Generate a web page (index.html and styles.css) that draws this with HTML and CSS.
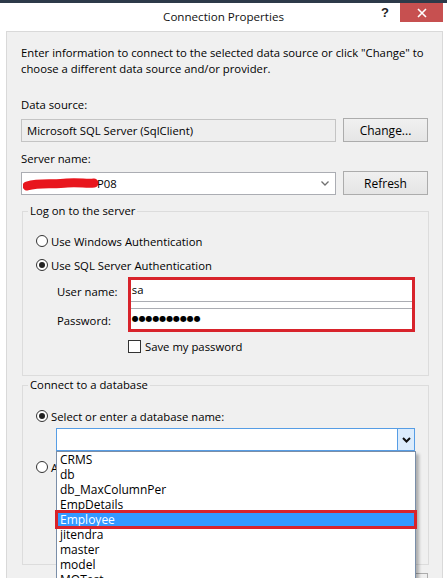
FILE: index.html
```html
<!DOCTYPE html>
<html>
<head>
<meta charset="utf-8">
<title>Connection Properties</title>
<link rel="stylesheet" href="styles.css">
</head>
<body>
<div class="topstrip"></div>
<div class="titlebar">
  <div></div>
  <div class="title">Connection Properties</div>
  <div class="title-actions">
    <span class="help">?</span>
    <span class="close">
      <svg width="10" height="10" viewBox="0 0 10 10"><path d="M1 1L9 9M9 1L1 9" stroke="#fff" stroke-width="1.6"/></svg>
    </span>
  </div>
</div>
<div class="panel">
  <p class="desc">Enter information to connect to the selected data source or click "Change" to choose a different data source and/or provider.</p>

  <div class="label mt20">Data source:</div>
  <div class="row mt5">
    <div class="textbox readonly">Microsoft SQL Server (SqlClient)</div>
    <div class="button">Change...</div>
  </div>

  <div class="label mt9">Server name:</div>
  <div class="row mt4">
    <div class="textbox combo">
      <span class="server">
        <svg class="scribble" width="76" height="14" viewBox="0 0 76 14"><path d="M4 9C18 5 30 8 44 6C56 5 64 7 71 6" stroke="#e8161d" stroke-width="9" stroke-linecap="round" fill="none"/></svg>
        <span class="server-text">P08</span>
      </span>
      <svg class="chev" width="8" height="5" viewBox="0 0 8 5"><path d="M0.5 0.5L4 4L7.5 0.5" stroke="#707070" stroke-width="1.3" fill="none"/></svg>
    </div>
    <div class="button">Refresh</div>
  </div>

  <fieldset class="group g1">
    <legend>Log on to the server</legend>
    <div class="group-body b1">
      <div class="radio-row"><span class="radio"></span><span>Use Windows Authentication</span></div>
      <div class="radio-row mt8"><span class="radio checked"></span><span>Use SQL Server Authentication</span></div>
      <div class="creds">
        <div class="cred-labels">
          <div class="cred-label l1">User name:</div>
          <div class="cred-label l2">Password:</div>
        </div>
        <div class="redframe">
          <div class="input user">sa</div>
          <div class="input pw">●●●●●●●●●●</div>
        </div>
      </div>
      <div class="check-row"><span class="checkbox"></span><span>Save my password</span></div>
    </div>
  </fieldset>

  <fieldset class="group g2">
    <legend>Connect to a database</legend>
    <div class="group-body b2">
      <div class="radio-row"><span class="radio checked"></span><span>Select or enter a database name:</span></div>
      <div class="dbcombo">
        <div class="dbcombo-btn">
          <svg width="9" height="6" viewBox="0 0 9 6"><path d="M1 1L4.5 4.5L8 1" stroke="#111" stroke-width="2" fill="none"/></svg>
        </div>
        <ul class="dblist">
          <li>CRMS</li>
          <li>db</li>
          <li>db_MaxColumnPer</li>
          <li>EmpDetails</li>
          <li class="selected">Employee</li>
          <li>jitendra</li>
          <li>master</li>
          <li>model</li>
          <li>MOTest</li>
        </ul>
      </div>
      <div class="radio-row mt8"><span class="radio"></span><span>Attach a database file:</span></div>
      <div class="row file-row">
        <div class="textbox"></div>
        <div class="button">Browse...</div>
      </div>
      <div class="label sub mt6">Logical name:</div>
      <div class="textbox sub logical"></div>
    </div>
  </fieldset>

  <div class="footer-row">
    <div class="button">Advanced...</div>
  </div>
</div>
</body>
</html>
```

FILE: styles.css
```css
* { box-sizing: border-box; }

body {
  margin: 0;
  width: 447px;
  height: 578px;
  overflow: hidden;
  background: #ffffff;
  font-family: "Open Sans", "Noto Sans", sans-serif;
  font-size: 11.3px;
  color: #000;
}

.topstrip {
  height: 3px;
  background: #2d3a49;
}

.titlebar {
  height: 28px;
  display: grid;
  grid-template-columns: 1fr auto 1fr;
  align-items: start;
}

.title {
  padding-top: 6px;
  line-height: 16px;
  font-size: 11.6px;
  color: #111;
}

.title-actions {
  display: flex;
  justify-content: flex-end;
  align-items: flex-start;
  padding-right: 4px;
}

.help {
  font-family: "Liberation Sans", sans-serif;
  font-weight: bold;
  font-size: 13px;
  line-height: 19px;
  margin-right: 11px;
  color: #222;
}

.close {
  width: 43px;
  height: 19px;
  background: #c75050;
  display: flex;
  align-items: center;
  justify-content: center;
}

.panel {
  margin: 0 4px 0 6px;
  height: 560px;
  border: 1px solid #d9d9d9;
  background: #f0f0f0;
  padding: 13px 14px 0 14px;
}

.desc {
  margin: 0;
  line-height: 16px;
}

.label { line-height: 16px; }
.mt20 { margin-top: 20px; }
.mt9 { margin-top: 9px; }
.mt8 { margin-top: 8px; }
.mt6 { margin-top: 6px; }
.mt5 { margin-top: 5px; }
.mt4 { margin-top: 4px; }

.row {
  display: flex;
  gap: 7px;
  align-items: center;
}

.textbox {
  flex: 1;
  height: 23px;
  border: 1px solid #abadb3;
  background: #fff;
  padding: 0 5px;
  line-height: 21px;
  display: flex;
  align-items: center;
}

.textbox.readonly {
  background: #eeeeee;
  border-color: #c4c4c4;
}

.combo {
  justify-content: space-between;
  padding: 0 6px 0 1px;
}

.server {
  display: flex;
  align-items: center;
}

.scribble { display: block; margin-top: 1px; }

.server-text { margin-left: -2px; }

.chev { display: block; margin-top: 1px; }

.button {
  width: 85px;
  height: 24px;
  border: 1px solid #acacac;
  background: linear-gradient(#f0f0f0, #e5e5e5);
  display: flex;
  align-items: center;
  justify-content: center;
  font-size: 12px;
}

.group {
  margin: 8px -1px 0 1px;
  padding: 0;
  border: 1px solid #dcdcdc;
  min-width: 0;
}

.group legend {
  margin-left: 5px;
  padding: 0 2px;
  line-height: 16px;
}

.g2 { margin-top: 1px; }

.group-body {
  padding: 14px 13px 21px 13px;
}

.b2 {
  padding: 15px 13px 12px 13px;
}

.radio-row {
  display: flex;
  align-items: center;
  height: 16px;
  gap: 3px;
}

.radio {
  width: 12px;
  height: 12px;
  border: 1px solid #333;
  border-radius: 50%;
  background: #fff;
  display: flex;
  align-items: center;
  justify-content: center;
}

.radio.checked::after {
  content: "";
  width: 6px;
  height: 6px;
  border-radius: 50%;
  background: #222;
}

.creds {
  display: flex;
  margin: 4px 0 0 21px;
}

.cred-labels {
  width: 71px;
  display: flex;
  flex-direction: column;
}

.cred-label { line-height: 16px; }
.l1 { margin-top: 7px; }
.l2 { margin-top: 13px; }

.redframe {
  width: 288px;
  border: 3px solid #d8232b;
  background: #fff;
  display: flex;
  flex-direction: column;
  gap: 6px;
}

.input {
  padding-left: 1px;
  line-height: 20px;
}

.input.user {
  height: 22px;
  border-bottom: 1px solid #abadb3;
}

.input.pw {
  height: 21px;
  border-top: 1px solid #abadb3;
  font-family: "DejaVu Sans", sans-serif;
  font-size: 8px;
  letter-spacing: -0.1px;
}

.check-row {
  display: flex;
  align-items: center;
  height: 16px;
  gap: 4px;
  margin: 6px 0 0 92px;
}

.checkbox {
  width: 13px;
  height: 13px;
  border: 1px solid #333;
  background: #fff;
}

.dbcombo {
  position: relative;
  margin: 4px 0 0 20px;
  width: 359px;
  height: 23px;
  border: 1px solid #569de5;
  background: #fff;
  display: flex;
  justify-content: flex-end;
}

.dbcombo-btn {
  width: 17px;
  height: 21px;
  border-left: 1px solid #569de5;
  background: #dcecfc;
  display: flex;
  align-items: center;
  justify-content: center;
}

.dblist {
  position: absolute;
  top: 22px;
  left: -1px;
  width: 360px;
  margin: 0;
  padding: 0;
  list-style: none;
  background: #fff;
  border: 1px solid #7a8ea8;
  box-shadow: 3px 3px 3px rgba(0, 0, 0, 0.28);
  font-size: 12px;
  z-index: 2;
}

.dblist li {
  height: 15px;
  line-height: 15px;
  padding-left: 3px;
}

.dblist li.selected {
  background: #3399ff;
  color: #fff;
  outline: 3px solid #d8232b;
  outline-offset: -1px;
}

.file-row {
  margin: 4px 0 0 20px;
  width: 359px;
}

.sub { margin-left: 20px; }

.logical {
  width: 359px;
  flex: none;
  margin-top: 4px;
}

.footer-row {
  display: flex;
  justify-content: flex-end;
  margin-top: 8px;
}
```
